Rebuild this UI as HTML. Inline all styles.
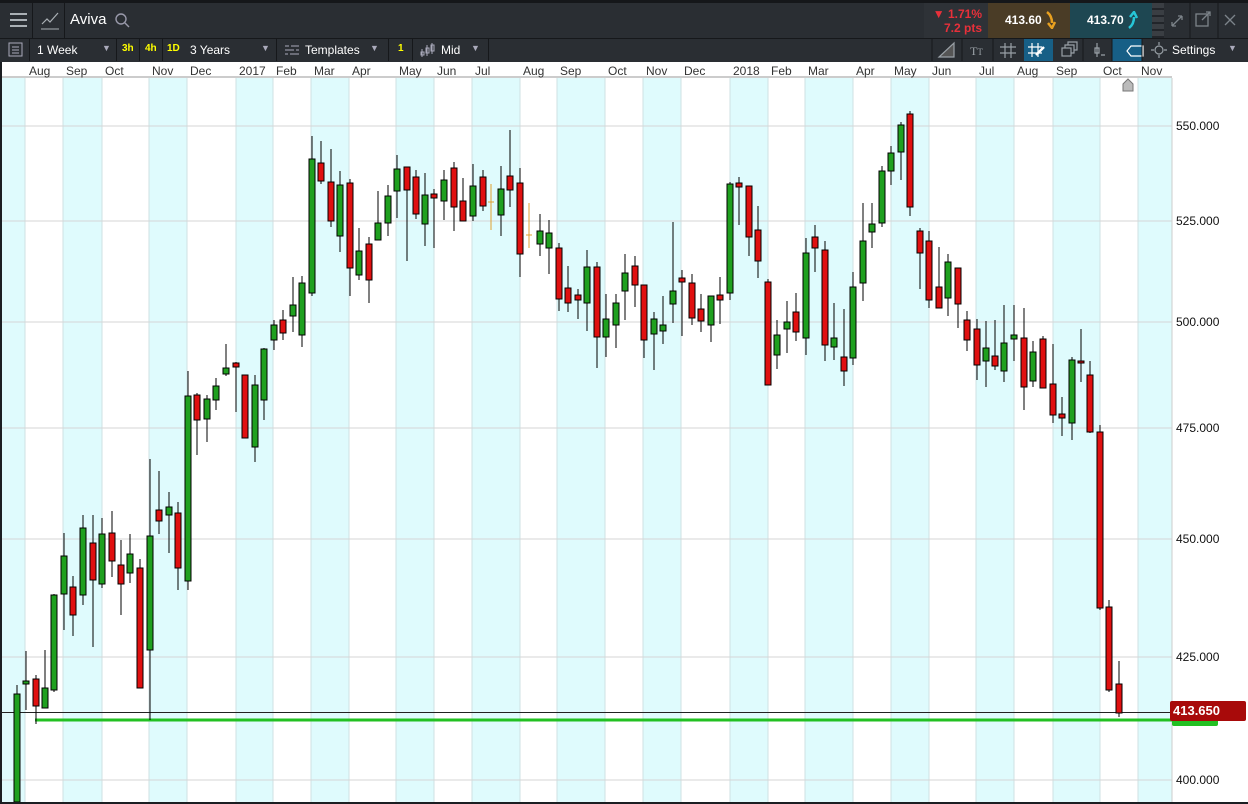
<!DOCTYPE html>
<html><head><meta charset="utf-8"><style>
*{margin:0;padding:0;box-sizing:border-box}
body{width:1248px;height:804px;overflow:hidden;background:#1b1e22;font-family:"Liberation Sans",sans-serif;position:relative}
.a{position:absolute}
.top{left:0;top:0;width:1248px;height:38px;background:#2a2e33;border-top:3px solid #15171a}
.tb{left:0;top:38px;width:1248px;height:24px;background:#2a2e33;border-top:1px solid #16181b}
.t{color:#fff;font-size:12px;position:absolute;white-space:nowrap}
.y{color:#ff0;font-size:10px;font-weight:bold;position:absolute;top:43px}
.sep{position:absolute;top:39px;width:1px;height:22px;background:#16181b}
.ml{position:absolute;top:64px;font-size:12px;color:#333}
.pl{position:absolute;left:1176px;font-size:12px;color:#111}
</style></head><body>
<div class="a top"></div>
<div class="a" style="left:32px;top:3px;width:1px;height:35px;background:#16181b"></div>
<div class="a" style="left:64px;top:3px;width:1px;height:35px;background:#16181b"></div>
<svg class="a" style="left:0;top:0" width="1248" height="38">
<g stroke="#aab0b5" stroke-width="2"><line x1="10" y1="14" x2="27" y2="14"/><line x1="10" y1="20" x2="27" y2="20"/><line x1="10" y1="26" x2="27" y2="26"/></g>
<polyline points="42,24 47,19 50,22 58,13" fill="none" stroke="#aab0b5" stroke-width="1.2"/><line x1="41" y1="29" x2="59" y2="29" stroke="#aab0b5"/>
<circle cx="121" cy="19" r="5" fill="none" stroke="#99a" stroke-width="1.4"/><line x1="125" y1="23" x2="129" y2="27" stroke="#99a" stroke-width="1.4"/>
</svg>
<div class="t" style="left:70px;top:11px;font-size:15px">Aviva</div>
<div class="a" style="left:924px;top:3px;width:64px;height:35px;background:#2e3237"></div>
<div class="a" style="left:924px;top:7px;color:#e8303a;font-size:12px;font-weight:bold;width:58px;text-align:right;white-space:nowrap">▼ 1.71%</div>
<div class="a" style="left:924px;top:21px;color:#e8303a;font-size:12px;font-weight:bold;width:58px;text-align:right;white-space:nowrap">7.2 pts</div>
<div class="a" style="left:988px;top:3px;width:82px;height:35px;background:#4a3c26"></div>
<div class="a" style="left:1005px;top:13px;color:#fff;font-size:12px;font-weight:bold">413.60</div>
<svg class="a" style="left:1044px;top:11px" width="12" height="18"><path d="M3 1 C7 4 8 8 8 12 M4 12 L8 17 L11 11" fill="none" stroke="#e8a020" stroke-width="2.5"/></svg>
<div class="a" style="left:1070px;top:3px;width:82px;height:35px;background:#1e4752"></div>
<div class="a" style="left:1087px;top:13px;color:#fff;font-size:12px;font-weight:bold">413.70</div>
<svg class="a" style="left:1126px;top:11px" width="12" height="18"><path d="M3 17 C7 14 8 10 8 6 M4 6 L8 1 L11 7" fill="none" stroke="#26c6d8" stroke-width="2.5"/></svg>
<div class="a" style="left:1152px;top:3px;width:12px;height:35px;background:repeating-linear-gradient(#3a3e43 0 5px,#22252a 5px 7px)"></div>
<svg class="a" style="left:1165px;top:3px" width="83" height="35">
<g stroke="#7d848a" stroke-width="1.3" fill="none"><path d="M7 23 L17 13 M7 23 h4 M7 23 v-4 M17 13 h-4 M17 13 v4"/><rect x="31" y="11" width="12" height="12"/><path d="M37 17 L45 9 M41 9 h4 v4"/><path d="M60 12 L70 22 M70 12 L60 22"/></g>
<line x1="25" y1="0" x2="25" y2="35" stroke="#16181b"/><line x1="53" y1="0" x2="53" y2="35" stroke="#16181b"/></svg>
<div class="a tb"></div>
<svg class="a" style="left:8px;top:42px" width="16" height="16"><rect x="1" y="1" width="13" height="13" fill="none" stroke="#aab" /><g stroke="#aab"><line x1="4" y1="5" x2="11" y2="5"/><line x1="4" y1="8" x2="11" y2="8"/><line x1="4" y1="11" x2="11" y2="11"/></g></svg>
<div class="sep" style="left:29px"></div>
<div class="t" style="left:37px;top:43px">1 Week</div><div class="t" style="left:102px;top:43px;font-size:9px;color:#aab">▼</div>
<div class="sep" style="left:116px"></div>
<div class="y" style="left:122px">3h</div><div class="sep" style="left:139px"></div>
<div class="y" style="left:145px">4h</div><div class="sep" style="left:162px"></div>
<div class="y" style="left:167px">1D</div>
<div class="t" style="left:190px;top:43px">3 Years</div><div class="t" style="left:261px;top:43px;font-size:9px;color:#aab">▼</div>
<div class="sep" style="left:276px"></div>
<svg class="a" style="left:284px;top:43px" width="16" height="14"><g stroke="#aab"><line x1="1" y1="3" x2="15" y2="3"/><line x1="1" y1="7" x2="15" y2="7"/><line x1="1" y1="11" x2="15" y2="11"/></g><g fill="#2a2e33"><rect x="5" y="1" width="2" height="4"/><rect x="10" y="5" width="2" height="4"/><rect x="4" y="9" width="2" height="4"/></g></svg>
<div class="t" style="left:305px;top:43px">Templates</div><div class="t" style="left:370px;top:43px;font-size:9px;color:#aab">▼</div>
<div class="sep" style="left:388px"></div>
<div class="y" style="left:398px">1</div>
<div class="sep" style="left:412px"></div>
<svg class="a" style="left:419px;top:42px" width="16" height="16"><g stroke="#aab" fill="none"><line x1="3" y1="7" x2="3" y2="15"/><rect x="2" y="10" width="3" height="3"/><line x1="8" y1="3" x2="8" y2="14"/><rect x="7" y="6" width="3" height="5"/><line x1="13" y1="1" x2="13" y2="12"/><rect x="12" y="3" width="3" height="6"/></g></svg>
<div class="t" style="left:441px;top:43px">Mid</div><div class="t" style="left:471px;top:43px;font-size:9px;color:#aab">▼</div>
<div class="sep" style="left:488px"></div>
<div class="a" style="left:1024px;top:39px;width:29px;height:22px;background:#175f86"></div>
<div class="a" style="left:1112px;top:39px;width:30px;height:22px;background:#175f86"></div>
<svg class="a" style="left:930px;top:38px" width="318" height="24">
<g fill="none" stroke="#99a0a6" stroke-width="1.2">
<path d="M9 19 L24 19 L24 5 Z" fill="#555"/>
<path d="M75 5 L75 20 M81 5 L81 20 M70 9 L86 9 M70 15 L86 15"/>
<rect x="132" y="10" width="9" height="8"/><path d="M135 10 V7 H144 V15 H141 M138 7 V4 H147 V12 H144"/>
<path d="M167 5 V19 M165 10 h4 v5 h-4z M171 17 h4"/>
<path d="M201 8 h12 v10 h-12 l-4 -5 z" stroke="#fff"/>
<circle cx="229" cy="12" r="4"/><path d="M229 4 v3 M229 17 v3 M221 12 h3 M234 12 h3"/>
</g>
<text x="40" y="17" fill="#99a0a6" font-size="12" font-family="Liberation Serif">T<tspan font-size="9">T</tspan></text>
<path d="M102 5 V19 M108 5 V19 M98 9 H112 M98 15 H112" stroke="#fff" stroke-width="1.2"/><path d="M106 17 L114 9" stroke="#fff" stroke-width="2.5"/>
<g stroke="#16181b"><line x1="2" y1="1" x2="2" y2="23"/><line x1="32" y1="1" x2="32" y2="23"/><line x1="63" y1="1" x2="63" y2="23"/><line x1="153" y1="1" x2="153" y2="23"/><line x1="182" y1="1" x2="182" y2="23"/><line x1="212" y1="1" x2="212" y2="23"/></g>
</svg>
<div class="t" style="left:1172px;top:43px">Settings</div><div class="t" style="left:1228px;top:43px;font-size:9px;color:#aab">▼</div>
<div class="a" style="left:2px;top:62px;width:1246px;height:740px;background:#fff"></div>
<svg class="a" style="left:0;top:0" width="1248" height="804">
<g fill="#dffbfd">
<rect x="2" y="78" width="23" height="724"/><rect x="63" y="78" width="39" height="724"/><rect x="149" y="78" width="38" height="724"/><rect x="236" y="78" width="37" height="724"/><rect x="311" y="78" width="38" height="724"/><rect x="396" y="78" width="38" height="724"/><rect x="472" y="78" width="48" height="724"/><rect x="557" y="78" width="48" height="724"/><rect x="643" y="78" width="38" height="724"/><rect x="730" y="78" width="38" height="724"/><rect x="805" y="78" width="48" height="724"/><rect x="891" y="78" width="38" height="724"/><rect x="976" y="78" width="38" height="724"/><rect x="1053" y="78" width="47" height="724"/><rect x="1138" y="78" width="34" height="724"/>
</g>
<g stroke="#cfe0e3"><path d="M25 78V802M63 78V802M102 78V802M149 78V802M187 78V802M236 78V802M273 78V802M311 78V802M349 78V802M396 78V802M434 78V802M472 78V802M520 78V802M557 78V802M605 78V802M643 78V802M681 78V802M730 78V802M768 78V802M805 78V802M853 78V802M891 78V802M929 78V802M976 78V802M1014 78V802M1053 78V802M1100 78V802M1138 78V802"/></g>
<g stroke="#d6d6d6"><path d="M2 126H1172M2 221H1172M2 322H1172M2 428H1172M2 539H1172M2 657H1172M2 780H1172"/></g>
<line x1="2" y1="77" x2="1172" y2="77" stroke="#ccc" stroke-width="2"/>
<line x1="1172" y1="78" x2="1172" y2="802" stroke="#ccc"/>
<path d="M1123 91 V84 L1128 79 L1133 84 V91 Z" fill="#bbb" stroke="#777"/>
<line x1="2" y1="712.5" x2="1172" y2="712.5" stroke="#222"/>
<line x1="35" y1="720" x2="1172" y2="720" stroke="#22c022" stroke-width="3"/>
<g stroke="#000" stroke-width="1">
<line x1="17" y1="685" x2="17" y2="802"/><rect x="14" y="694" width="6" height="108" fill="#1fa01f"/>
<line x1="26" y1="651" x2="26" y2="710"/><rect x="23" y="681" width="6" height="3" fill="#1fa01f"/>
<line x1="36" y1="675" x2="36" y2="724"/><rect x="33" y="679" width="6" height="27" fill="#e01010"/>
<line x1="45" y1="650" x2="45" y2="708"/><rect x="42" y="688" width="6" height="20" fill="#1fa01f"/>
<line x1="54" y1="594" x2="54" y2="692"/><rect x="51" y="595" width="6" height="95" fill="#1fa01f"/>
<line x1="64" y1="533" x2="64" y2="630"/><rect x="61" y="556" width="6" height="38" fill="#1fa01f"/>
<line x1="73" y1="576" x2="73" y2="636"/><rect x="70" y="587" width="6" height="28" fill="#e01010"/>
<line x1="83" y1="515" x2="83" y2="605"/><rect x="80" y="528" width="6" height="67" fill="#1fa01f"/>
<line x1="93" y1="515" x2="93" y2="647"/><rect x="90" y="543" width="6" height="37" fill="#e01010"/>
<line x1="102" y1="518" x2="102" y2="588"/><rect x="99" y="534" width="6" height="50" fill="#1fa01f"/>
<line x1="112" y1="511" x2="112" y2="577"/><rect x="109" y="533" width="6" height="28" fill="#e01010"/>
<line x1="121" y1="540" x2="121" y2="615"/><rect x="118" y="565" width="6" height="19" fill="#e01010"/>
<line x1="130" y1="534" x2="130" y2="583"/><rect x="127" y="554" width="6" height="19" fill="#1fa01f"/>
<line x1="140" y1="559" x2="140" y2="688"/><rect x="137" y="568" width="6" height="120" fill="#e01010"/>
<line x1="150" y1="459" x2="150" y2="720"/><rect x="147" y="536" width="6" height="114" fill="#1fa01f"/>
<line x1="159" y1="471" x2="159" y2="534"/><rect x="156" y="510" width="6" height="11" fill="#e01010"/>
<line x1="169" y1="492" x2="169" y2="553"/><rect x="166" y="507" width="6" height="8" fill="#1fa01f"/>
<line x1="178" y1="502" x2="178" y2="590"/><rect x="175" y="513" width="6" height="55" fill="#e01010"/>
<line x1="188" y1="371" x2="188" y2="590"/><rect x="185" y="396" width="6" height="185" fill="#1fa01f"/>
<line x1="197" y1="393" x2="197" y2="455"/><rect x="194" y="395" width="6" height="25" fill="#e01010"/>
<line x1="207" y1="395" x2="207" y2="442"/><rect x="204" y="399" width="6" height="20" fill="#1fa01f"/>
<line x1="216" y1="378" x2="216" y2="410"/><rect x="213" y="386" width="6" height="14" fill="#1fa01f"/>
<line x1="226" y1="344" x2="226" y2="376"/><rect x="223" y="368" width="6" height="6" fill="#1fa01f"/>
<line x1="236" y1="362" x2="236" y2="412"/><rect x="233" y="363" width="6" height="4" fill="#e01010"/>
<line x1="245" y1="375" x2="245" y2="438"/><rect x="242" y="375" width="6" height="63" fill="#e01010"/>
<line x1="255" y1="375" x2="255" y2="462"/><rect x="252" y="385" width="6" height="62" fill="#1fa01f"/>
<line x1="264" y1="348" x2="264" y2="420"/><rect x="261" y="349" width="6" height="51" fill="#1fa01f"/>
<line x1="274" y1="320" x2="274" y2="350"/><rect x="271" y="325" width="6" height="15" fill="#1fa01f"/>
<line x1="283" y1="310" x2="283" y2="340"/><rect x="280" y="320" width="6" height="13" fill="#e01010"/>
<line x1="293" y1="277" x2="293" y2="332"/><rect x="290" y="305" width="6" height="11" fill="#1fa01f"/>
<line x1="302" y1="276" x2="302" y2="347"/><rect x="299" y="283" width="6" height="52" fill="#1fa01f"/>
<line x1="312" y1="136" x2="312" y2="296"/><rect x="309" y="159" width="6" height="134" fill="#1fa01f"/>
<line x1="321" y1="141" x2="321" y2="184"/><rect x="318" y="163" width="6" height="18" fill="#e01010"/>
<line x1="331" y1="149" x2="331" y2="227"/><rect x="328" y="182" width="6" height="39" fill="#e01010"/>
<line x1="340" y1="171" x2="340" y2="252"/><rect x="337" y="185" width="6" height="51" fill="#1fa01f"/>
<line x1="350" y1="179" x2="350" y2="296"/><rect x="347" y="183" width="6" height="85" fill="#e01010"/>
<line x1="359" y1="228" x2="359" y2="280"/><rect x="356" y="251" width="6" height="24" fill="#1fa01f"/>
<line x1="369" y1="237" x2="369" y2="303"/><rect x="366" y="244" width="6" height="36" fill="#e01010"/>
<line x1="378" y1="191" x2="378" y2="236"/><rect x="375" y="223" width="6" height="17" fill="#1fa01f"/>
<line x1="388" y1="185" x2="388" y2="236"/><rect x="385" y="196" width="6" height="27" fill="#1fa01f"/>
<line x1="397" y1="155" x2="397" y2="218"/><rect x="394" y="169" width="6" height="22" fill="#1fa01f"/>
<line x1="407" y1="167" x2="407" y2="261"/><rect x="404" y="167" width="6" height="23" fill="#e01010"/>
<line x1="416" y1="170" x2="416" y2="219"/><rect x="413" y="177" width="6" height="37" fill="#e01010"/>
<line x1="425" y1="173" x2="425" y2="246"/><rect x="422" y="195" width="6" height="29" fill="#1fa01f"/>
<line x1="434" y1="189" x2="434" y2="248"/><rect x="431" y="194" width="6" height="4" fill="#e01010"/>
<line x1="444" y1="170" x2="444" y2="220"/><rect x="441" y="180" width="6" height="21" fill="#1fa01f"/>
<line x1="454" y1="162" x2="454" y2="231"/><rect x="451" y="168" width="6" height="39" fill="#e01010"/>
<line x1="463" y1="178" x2="463" y2="221"/><rect x="460" y="201" width="6" height="20" fill="#e01010"/>
<line x1="473" y1="164" x2="473" y2="221"/><rect x="470" y="186" width="6" height="30" fill="#1fa01f"/>
<line x1="483" y1="170" x2="483" y2="211"/><rect x="480" y="177" width="6" height="29" fill="#e01010"/>
<line x1="501" y1="166" x2="501" y2="236"/><rect x="498" y="189" width="6" height="26" fill="#1fa01f"/>
<line x1="510" y1="130" x2="510" y2="207"/><rect x="507" y="176" width="6" height="14" fill="#e01010"/>
<line x1="520" y1="168" x2="520" y2="277"/><rect x="517" y="183" width="6" height="71" fill="#e01010"/>
<line x1="540" y1="214" x2="540" y2="256"/><rect x="537" y="231" width="6" height="13" fill="#1fa01f"/>
<line x1="549" y1="220" x2="549" y2="274"/><rect x="546" y="233" width="6" height="15" fill="#1fa01f"/>
<line x1="559" y1="243" x2="559" y2="311"/><rect x="556" y="248" width="6" height="51" fill="#e01010"/>
<line x1="568" y1="266" x2="568" y2="312"/><rect x="565" y="288" width="6" height="15" fill="#e01010"/>
<line x1="578" y1="289" x2="578" y2="319"/><rect x="575" y="295" width="6" height="5" fill="#e01010"/>
<line x1="587" y1="250" x2="587" y2="331"/><rect x="584" y="267" width="6" height="36" fill="#1fa01f"/>
<line x1="597" y1="262" x2="597" y2="368"/><rect x="594" y="267" width="6" height="70" fill="#e01010"/>
<line x1="606" y1="294" x2="606" y2="357"/><rect x="603" y="319" width="6" height="18" fill="#1fa01f"/>
<line x1="616" y1="294" x2="616" y2="348"/><rect x="613" y="303" width="6" height="22" fill="#1fa01f"/>
<line x1="625" y1="254" x2="625" y2="320"/><rect x="622" y="273" width="6" height="18" fill="#1fa01f"/>
<line x1="635" y1="256" x2="635" y2="307"/><rect x="632" y="266" width="6" height="19" fill="#e01010"/>
<line x1="644" y1="285" x2="644" y2="358"/><rect x="641" y="285" width="6" height="55" fill="#e01010"/>
<line x1="654" y1="312" x2="654" y2="370"/><rect x="651" y="319" width="6" height="15" fill="#1fa01f"/>
<line x1="663" y1="296" x2="663" y2="344"/><rect x="660" y="325" width="6" height="6" fill="#1fa01f"/>
<line x1="673" y1="222" x2="673" y2="323"/><rect x="670" y="291" width="6" height="13" fill="#1fa01f"/>
<line x1="682" y1="270" x2="682" y2="336"/><rect x="679" y="278" width="6" height="4" fill="#e01010"/>
<line x1="692" y1="274" x2="692" y2="325"/><rect x="689" y="283" width="6" height="35" fill="#e01010"/>
<line x1="701" y1="294" x2="701" y2="332"/><rect x="698" y="309" width="6" height="12" fill="#e01010"/>
<line x1="711" y1="297" x2="711" y2="342"/><rect x="708" y="296" width="6" height="29" fill="#1fa01f"/>
<line x1="720" y1="277" x2="720" y2="324"/><rect x="717" y="295" width="6" height="5" fill="#e01010"/>
<line x1="730" y1="182" x2="730" y2="300"/><rect x="727" y="184" width="6" height="109" fill="#1fa01f"/>
<line x1="739" y1="177" x2="739" y2="225"/><rect x="736" y="183" width="6" height="4" fill="#e01010"/>
<line x1="749" y1="186" x2="749" y2="256"/><rect x="746" y="186" width="6" height="51" fill="#e01010"/>
<line x1="758" y1="206" x2="758" y2="278"/><rect x="755" y="230" width="6" height="31" fill="#e01010"/>
<line x1="768" y1="279" x2="768" y2="385"/><rect x="765" y="282" width="6" height="103" fill="#e01010"/>
<line x1="777" y1="320" x2="777" y2="369"/><rect x="774" y="335" width="6" height="20" fill="#1fa01f"/>
<line x1="787" y1="301" x2="787" y2="353"/><rect x="784" y="322" width="6" height="7" fill="#1fa01f"/>
<line x1="796" y1="293" x2="796" y2="341"/><rect x="793" y="312" width="6" height="20" fill="#e01010"/>
<line x1="806" y1="238" x2="806" y2="355"/><rect x="803" y="253" width="6" height="85" fill="#1fa01f"/>
<line x1="815" y1="225" x2="815" y2="272"/><rect x="812" y="237" width="6" height="11" fill="#e01010"/>
<line x1="825" y1="241" x2="825" y2="361"/><rect x="822" y="250" width="6" height="95" fill="#e01010"/>
<line x1="834" y1="303" x2="834" y2="360"/><rect x="831" y="338" width="6" height="9" fill="#1fa01f"/>
<line x1="844" y1="309" x2="844" y2="386"/><rect x="841" y="357" width="6" height="14" fill="#e01010"/>
<line x1="853" y1="272" x2="853" y2="365"/><rect x="850" y="287" width="6" height="71" fill="#1fa01f"/>
<line x1="863" y1="203" x2="863" y2="301"/><rect x="860" y="241" width="6" height="42" fill="#1fa01f"/>
<line x1="872" y1="203" x2="872" y2="248"/><rect x="869" y="224" width="6" height="8" fill="#1fa01f"/>
<line x1="882" y1="166" x2="882" y2="227"/><rect x="879" y="171" width="6" height="52" fill="#1fa01f"/>
<line x1="891" y1="146" x2="891" y2="185"/><rect x="888" y="153" width="6" height="18" fill="#1fa01f"/>
<line x1="901" y1="122" x2="901" y2="180"/><rect x="898" y="125" width="6" height="27" fill="#1fa01f"/>
<line x1="910" y1="111" x2="910" y2="216"/><rect x="907" y="114" width="6" height="93" fill="#e01010"/>
<line x1="920" y1="228" x2="920" y2="289"/><rect x="917" y="231" width="6" height="22" fill="#e01010"/>
<line x1="929" y1="231" x2="929" y2="308"/><rect x="926" y="241" width="6" height="59" fill="#e01010"/>
<line x1="939" y1="247" x2="939" y2="308"/><rect x="936" y="287" width="6" height="21" fill="#e01010"/>
<line x1="948" y1="254" x2="948" y2="316"/><rect x="945" y="262" width="6" height="36" fill="#1fa01f"/>
<line x1="958" y1="268" x2="958" y2="328"/><rect x="955" y="268" width="6" height="36" fill="#e01010"/>
<line x1="967" y1="311" x2="967" y2="351"/><rect x="964" y="320" width="6" height="20" fill="#e01010"/>
<line x1="977" y1="319" x2="977" y2="380"/><rect x="974" y="329" width="6" height="36" fill="#e01010"/>
<line x1="986" y1="321" x2="986" y2="387"/><rect x="983" y="348" width="6" height="13" fill="#1fa01f"/>
<line x1="995" y1="320" x2="995" y2="370"/><rect x="992" y="356" width="6" height="10" fill="#e01010"/>
<line x1="1004" y1="305" x2="1004" y2="382"/><rect x="1001" y="343" width="6" height="28" fill="#1fa01f"/>
<line x1="1014" y1="305" x2="1014" y2="361"/><rect x="1011" y="335" width="6" height="4" fill="#1fa01f"/>
<line x1="1024" y1="308" x2="1024" y2="410"/><rect x="1021" y="338" width="6" height="49" fill="#e01010"/>
<line x1="1033" y1="341" x2="1033" y2="387"/><rect x="1030" y="352" width="6" height="29" fill="#1fa01f"/>
<line x1="1043" y1="336" x2="1043" y2="388"/><rect x="1040" y="339" width="6" height="49" fill="#e01010"/>
<line x1="1053" y1="344" x2="1053" y2="423"/><rect x="1050" y="384" width="6" height="31" fill="#e01010"/>
<line x1="1062" y1="397" x2="1062" y2="436"/><rect x="1059" y="414" width="6" height="4" fill="#e01010"/>
<line x1="1072" y1="357" x2="1072" y2="440"/><rect x="1069" y="360" width="6" height="63" fill="#1fa01f"/>
<line x1="1081" y1="329" x2="1081" y2="382"/><rect x="1078" y="361" width="6" height="2" fill="#e01010"/>
<line x1="1090" y1="361" x2="1090" y2="433"/><rect x="1087" y="375" width="6" height="57" fill="#e01010"/>
<line x1="1100" y1="425" x2="1100" y2="610"/><rect x="1097" y="432" width="6" height="176" fill="#e01010"/>
<line x1="1109" y1="600" x2="1109" y2="692"/><rect x="1106" y="607" width="6" height="83" fill="#e01010"/>
<line x1="1119" y1="661" x2="1119" y2="717"/><rect x="1116" y="684" width="6" height="29" fill="#e01010"/>
</g>
<g stroke="#e0a030"><path d="M491 184V230M488 202H494M529 203V248M526 235H532"/></g>
<rect x="1172" y="715" width="46" height="11" rx="2" fill="#22c022"/>
<rect x="1170" y="701" width="76" height="20" rx="2" fill="#a80a0a"/>
<rect x="0" y="62" width="2" height="742" fill="#1b1e22"/>
<rect x="0" y="802" width="1248" height="2" fill="#1b1e22"/>
</svg>
<div class="a" style="left:1173px;top:703px;color:#fff;font-weight:bold;font-size:13px">413.650</div>
<div class="pl" style="top:119px">550.000</div>
<div class="pl" style="top:214px">525.000</div>
<div class="pl" style="top:315px">500.000</div>
<div class="pl" style="top:421px">475.000</div>
<div class="pl" style="top:532px">450.000</div>
<div class="pl" style="top:650px">425.000</div>
<div class="pl" style="top:773px">400.000</div>
<div class="ml" style="left:29px">Aug</div><div class="ml" style="left:66px">Sep</div><div class="ml" style="left:105px">Oct</div><div class="ml" style="left:152px">Nov</div><div class="ml" style="left:190px">Dec</div><div class="ml" style="left:239px">2017</div><div class="ml" style="left:276px">Feb</div><div class="ml" style="left:314px">Mar</div><div class="ml" style="left:352px">Apr</div><div class="ml" style="left:399px">May</div><div class="ml" style="left:437px">Jun</div><div class="ml" style="left:475px">Jul</div><div class="ml" style="left:523px">Aug</div><div class="ml" style="left:560px">Sep</div><div class="ml" style="left:608px">Oct</div><div class="ml" style="left:646px">Nov</div><div class="ml" style="left:684px">Dec</div><div class="ml" style="left:733px">2018</div><div class="ml" style="left:771px">Feb</div><div class="ml" style="left:808px">Mar</div><div class="ml" style="left:856px">Apr</div><div class="ml" style="left:894px">May</div><div class="ml" style="left:932px">Jun</div><div class="ml" style="left:979px">Jul</div><div class="ml" style="left:1017px">Aug</div><div class="ml" style="left:1056px">Sep</div><div class="ml" style="left:1103px">Oct</div><div class="ml" style="left:1141px">Nov</div>
</body></html>
